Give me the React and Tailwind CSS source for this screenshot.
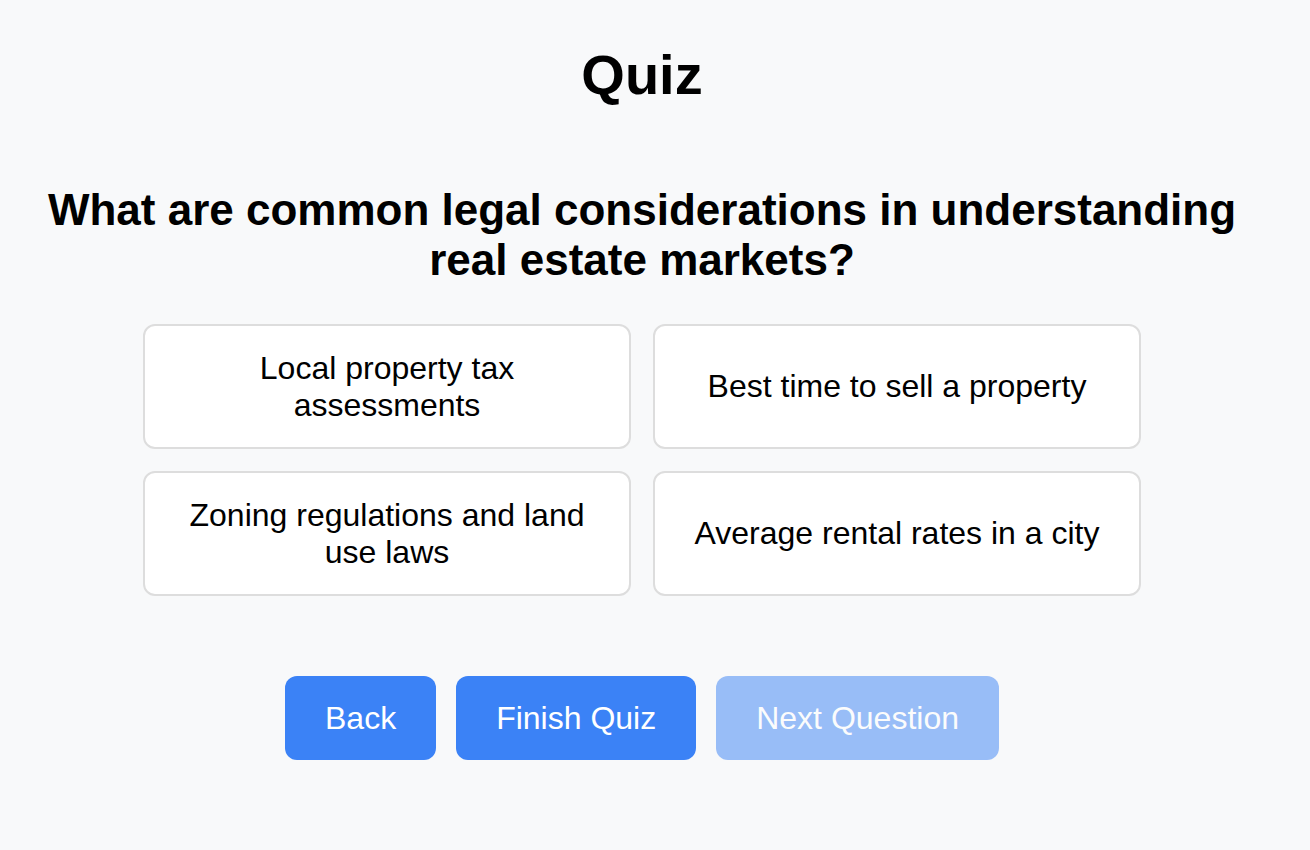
import { useState } from 'react'

const options = [
  'Local property tax assessments',
  'Best time to sell a property',
  'Zoning regulations and land use laws',
  'Average rental rates in a city',
]

export default function App() {
  const [picked, setPicked] = useState(null)

  return (
    <div
      className="min-h-[850px] w-full bg-[#f8f9fa] text-black"
      style={{ fontFamily: '"Liberation Sans", Arial, Helvetica, sans-serif' }}
    >
      <div className="w-[1284px] flex flex-col items-center pt-[43px]">
        <h1 className="text-[56px] font-bold leading-[64px]">Quiz</h1>

        <h2 className="mt-[78px] w-[1230px] text-center text-[44px] font-bold leading-[50px]">
          What are common legal considerations in understanding real estate markets?
        </h2>

        <div className="mt-[39px] w-[998px] grid grid-cols-2 gap-[22px]">
          {options.map((opt, i) => (
            <button
              key={opt}
              type="button"
              onClick={() => setPicked(i)}
              className={`h-[125px] flex items-center justify-center px-6 rounded-xl border-2 bg-white text-center text-[32px] leading-[37px] ${
                picked === i ? 'border-[#3b82f6]' : 'border-[#dddddd]'
              }`}
            >
              {opt}
            </button>
          ))}
        </div>

        <div className="mt-[80px] flex gap-5">
          <button type="button" className="h-[84px] px-10 rounded-xl bg-[#3b82f6] text-white text-[32px]">
            Back
          </button>
          <button type="button" className="h-[84px] px-10 rounded-xl bg-[#3b82f6] text-white text-[32px]">
            Finish Quiz
          </button>
          <button
            type="button"
            disabled
            className="h-[84px] px-10 rounded-xl bg-[#3b82f6] text-white text-[32px] opacity-50"
          >
            Next Question
          </button>
        </div>
      </div>
    </div>
  )
}
